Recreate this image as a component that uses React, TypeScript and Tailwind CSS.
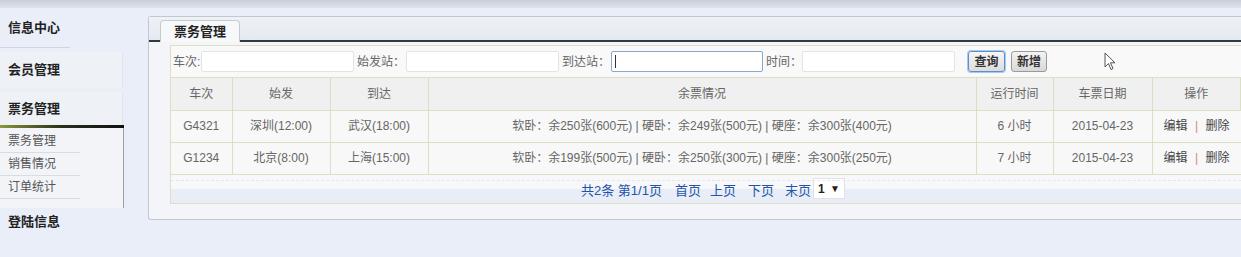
import { FC } from 'react';

const font = { fontFamily: '"Liberation Sans", "Noto Sans CJK SC", sans-serif' };

interface Ticket {
  no: string;
  from: string;
  to: string;
  remain: string;
  hours: string;
  date: string;
}

const tickets: Ticket[] = [
  {
    no: 'G4321',
    from: '深圳(12:00)',
    to: '武汉(18:00)',
    remain: '软卧：余250张(600元) | 硬卧：余249张(500元) | 硬座：余300张(400元)',
    hours: '6 小时',
    date: '2015-04-23',
  },
  {
    no: 'G1234',
    from: '北京(8:00)',
    to: '上海(15:00)',
    remain: '软卧：余199张(500元) | 硬卧：余250张(300元) | 硬座：余300张(250元)',
    hours: '7 小时',
    date: '2015-04-23',
  },
];

const Sidebar: FC = () => (
  <div className="w-[148px] shrink-0 flex flex-col text-[13px] text-[#222]">
    <div className="h-[39px] flex items-center pl-[8px] font-bold">信息中心</div>
    <div className="h-px w-[70px] bg-[#cfd5de]" />
    <div className="h-[4px]" />
    <div className="h-[36px] w-[123px] flex items-center pl-[8px] font-bold bg-[#eef1f6] border-r border-[#dfe3ea]">会员管理</div>
    <div className="h-[4px]" />
    <div className="h-[33px] w-[123px] flex items-center pl-[8px] font-bold bg-[#eef1f6] border-r border-[#dfe3ea]">票务管理</div>
    <div className="h-[3px] w-[124px] bg-gradient-to-r from-[#8a9a3a] via-[#2a2f1a] to-[#111]" />
    <div className="w-[124px] h-[80px] pt-[2px] border-r border-[#9aa0a8] bg-[#f2f4f8] text-[12px] text-[#555] font-normal">
      <div className="h-[23px] flex items-center pl-[8px] border-b border-[#d8dce3] w-[80px]">票务管理</div>
      <div className="h-[23px] flex items-center pl-[8px] border-b border-[#d8dce3] w-[80px]">销售情况</div>
      <div className="h-[23px] flex items-center pl-[8px] border-b border-[#d8dce3] w-[80px]">订单统计</div>
    </div>
    <div className="h-[28px] flex items-center pl-[8px] font-bold">登陆信息</div>
  </div>
);

const SearchField: FC<{ label: string; focused?: boolean; labelWidth: string }> = ({ label, focused, labelWidth }) => (
  <div className="flex items-center">
    <span className={`${labelWidth} text-[12px] text-[#666]`}>{label}</span>
    <div
      className={
        focused
          ? 'w-[152px] h-[21px] bg-white border border-[#8aa8cc] rounded-[2px] flex items-center pl-[3px]'
          : 'w-[153px] h-[21px] bg-white border border-[#e2e4e6] rounded-[2px]'
      }
    >
      {focused && <div className="w-px h-[13px] bg-[#333]" />}
    </div>
  </div>
);

const Cursor: FC = () => (
  <svg width="14" height="20" viewBox="0 0 14 20" className="absolute left-[933px] top-[6px]">
    <path d="M1 1 L1 15 L4.5 11.5 L7 17.5 L9 16.5 L6.5 10.8 L11 10.8 Z" fill="#fff" stroke="#555" strokeWidth="1" strokeLinejoin="round" />
  </svg>
);

const cell = 'border-r border-[#dcdfc4] text-center';

const App: FC = () => {
  return (
    <div className="w-[1241px] h-[257px] overflow-hidden bg-[#e9eef8] flex flex-col" style={font}>
      <div className="h-[8px] bg-gradient-to-b from-[#c9cfd8] to-[#dde3ec]" />
      <div className="flex flex-1">
        <Sidebar />
        <div className="flex-1 flex flex-col">
          <div className="h-[8px]" />
          <div className="h-[204px] border border-[#c3c8d0] border-r-0 rounded-l-[3px] bg-[#f3f5f9] flex flex-col">
            <div className="h-[25px] flex items-end pl-[11px] border-b-2 border-[#2e3a44] bg-gradient-to-b from-[#eef1f6] to-[#e4e9f1]">
              <div className="w-[80px] h-[22px] bg-[#f7f8fa] border border-b-0 border-[#c6cbd2] rounded-t-[4px] flex items-center justify-center text-[13px] font-bold text-[#222] -mb-[2px]">
                票务管理
              </div>
            </div>
            <div className="pl-[21px] pt-[3px]">
              <div className="border-l border-t border-b border-[#dcdfc4] bg-[#fafafa]">
                <div className="relative h-[32px] flex items-center pl-[2px] gap-[3px] border-b border-[#dcdfc4] bg-[#f9f9f9]">
                  <SearchField label="车次:" labelWidth="w-[28px]" />
                  <SearchField label="始发站：" labelWidth="w-[49px]" />
                  <SearchField label="到达站：" labelWidth="w-[49px]" focused />
                  <SearchField label="时间：" labelWidth="w-[36px]" />
                  <div className="flex gap-[6px] ml-[10px]">
                    <button className="w-[37px] h-[21px] text-[12px] font-bold text-[#333] bg-gradient-to-b from-[#f6f6f6] to-[#dcdcdc] border border-[#5a8fd0] rounded-[3px] shadow-[0_0_0_1px_#a8c8ee]">查询</button>
                    <button className="w-[36px] h-[21px] text-[12px] font-bold text-[#333] bg-gradient-to-b from-[#f3f3f3] to-[#d8d8d8] border border-[#9a9a9a] rounded-[3px]">新增</button>
                  </div>
                  <Cursor />
                </div>
                <table className="w-full border-collapse text-[12px] text-[#666]">
                  <colgroup>
                    <col className="w-[61px]" />
                    <col className="w-[98px]" />
                    <col className="w-[98px]" />
                    <col className="w-[548px]" />
                    <col className="w-[77px]" />
                    <col className="w-[99px]" />
                    <col />
                  </colgroup>
                  <thead>
                    <tr className="h-[32px] bg-[#f0f0f0]">
                      {['车次', '始发', '到达', '余票情况', '运行时间', '车票日期', '操作'].map((h) => (
                        <th key={h} className={`${cell} font-normal border-b`}>{h}</th>
                      ))}
                    </tr>
                  </thead>
                  <tbody>
                    {tickets.map((t) => (
                      <tr key={t.no} className="h-[32px] bg-[#f8f8f9] border-b border-[#dcdfc4]">
                        <td className={cell}>{t.no}</td>
                        <td className={cell}>{t.from}</td>
                        <td className={cell}>{t.to}</td>
                        <td className={cell}>{t.remain}</td>
                        <td className={cell}>{t.hours}</td>
                        <td className={cell}>{t.date}</td>
                        <td className="text-center text-[#444]">
                          编辑 <span className="text-[#c88] mx-[4px]">|</span> 删除
                        </td>
                      </tr>
                    ))}
                  </tbody>
                </table>
                <div className="h-[28px] relative bg-gradient-to-b from-[#f8f8fa] from-50% to-[#e8edf7] to-50%">
                  <div className="absolute left-0 right-0 top-[5px] border-t border-dashed border-[#e4e6ea]" />
                  <div className="h-full flex items-center justify-center pl-[14px] pt-[5px] text-[13px] text-[#2255aa]">
                    <span>共2条 第1/1页</span>
                    <span className="ml-[13px]">首页</span>
                    <span className="ml-[9px]">上页</span>
                    <span className="ml-[12px]">下页</span>
                    <span className="ml-[11px]">末页</span>
                    <div className="ml-[2px] w-[32px] h-[21px] bg-white border border-[#dfe2e6] flex items-center justify-between px-[4px] text-[12px] font-bold text-[#222] -mt-[5px]">
                      <span>1</span>
                      <span className="text-[10px]">▼</span>
                    </div>
                  </div>
                </div>
              </div>
            </div>
          </div>
        </div>
      </div>
    </div>
  );
};

export default App;
